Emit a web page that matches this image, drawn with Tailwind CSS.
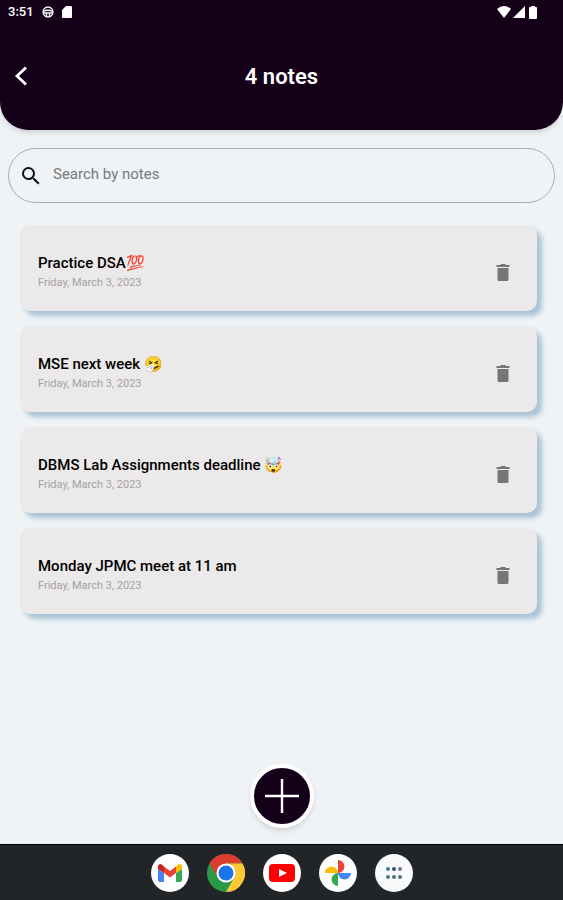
<!DOCTYPE html>
<html lang="en">
<head>
    <meta charset="UTF-8">
    <meta name="viewport" content="width=device-width, initial-scale=1.0">
    <title>Notes</title>
    <script src="https://cdn.jsdelivr.net/npm/@tailwindcss/browser@4"></script>
</head>
<body class="min-h-screen flex flex-col bg-[#eff3f6] font-[Roboto,sans-serif]">
    <!-- Header -->
    <header class="bg-[#150019] text-white rounded-b-[28px] shadow-md pb-[30px]">
        <div class="h-6 flex items-center justify-between pl-2 pr-6 text-[13px] font-medium">
            <div class="flex items-center gap-2">
                <span>3:51</span>
                <svg class="size-3" viewBox="0 0 24 24" fill="none" stroke="currentColor" stroke-width="2.6">
                    <circle cx="12" cy="12" r="10" />
                    <path d="M3 11Q12 6 21 11M3 14h18M9 14v7M15 14v7" />
                </svg>
                <svg class="w-[10px] h-3" viewBox="0 0 10 12" fill="currentColor">
                    <path d="M4 0h5a1 1 0 011 1v10a1 1 0 01-1 1H1a1 1 0 01-1-1V4z" />
                </svg>
            </div>
            <div class="flex items-center gap-[2px]">
                <svg class="w-[14px] h-3" viewBox="0 0 14 12" fill="currentColor"><path d="M0 3Q7-3 14 3L7 12z" /></svg>
                <svg class="size-3" viewBox="0 0 12 12" fill="currentColor"><path d="M12 0v12H0z" /></svg>
                <svg class="w-3 h-[13px]" viewBox="0 0 12 13" fill="currentColor"><path d="M4 0h4v1h1q1 0 1 1v10q0 1-1 1H3q-1 0-1-1V2q0-1 1-1h1z" /></svg>
            </div>
        </div>
        <div class="grid grid-cols-[1fr_auto_1fr] items-center h-[76px] pt-7 px-3">
            <button type="button" aria-label="Back" class="justify-self-start">
                <svg class="w-[18px] h-6" viewBox="0 0 18 24" fill="none" stroke="currentColor" stroke-width="2.8"><path d="M14 3.500L5 12l9 8.500" /></svg>
            </button>
            <h1 class="text-[22px] font-semibold">4 notes</h1>
        </div>
    </header>

    <main class="flex-1 flex flex-col px-2 pt-[18px]">
        <!-- Search -->
        <label class="flex items-center gap-3 h-[55px] border border-[#a9adb0] rounded-[28px] px-3">
            <svg class="size-5" viewBox="2 2 20 20" fill="#111111"><path d="M15.5 14h-.79l-.28-.27A6.47 6.47 0 0016 9.500 6.500 6.500 0 109.500 16c1.610 0 3.090-.59 4.230-1.570l.27.280v.790l5 4.990L20.490 19l-4.990-5zm-6 0C7.010 14 5 11.990 5 9.500S7.010 5 9.500 5 14 7.010 14 9.500 11.990 14 9.500 14z" /></svg>
            <input type="text" aria-label="Search by notes" placeholder="Search by notes" class="flex-1 pb-[2px] text-[15px] outline-none placeholder:text-[#77797b]">
        </label>

        <!-- Notes -->
        <ul class="flex flex-col gap-[15px] mt-[22px] ml-3 mr-[18px]">
            <li class="flex items-center justify-between h-[86px] px-[18px] pr-6 pt-[10px] rounded-[10px] bg-[#ebe9e9] shadow-[5px_5px_5px_#a9c3d5]">
                <div>
                    <h2 class="text-[15px] leading-5 font-medium text-black">Practice DSA💯</h2>
                    <p class="text-[11px] leading-5 text-[#a4a3a3]">Friday, March 3, 2023</p>
                </div>
                <button type="button" aria-label="Delete note" class="text-[#777676]">
                    <svg class="size-5" viewBox="0 0 20 20" fill="currentColor"><path d="M4.500 5h11v11.500q0 1.500-1.500 1.500H6q-1.500 0-1.500-1.500zM3.500 2H7l1-1h4l1 1h3.500v2h-13z" /></svg>
                </button>
            </li>
            <li class="flex items-center justify-between h-[86px] px-[18px] pr-6 pt-[10px] rounded-[10px] bg-[#ebe9e9] shadow-[5px_5px_5px_#a9c3d5]">
                <div>
                    <h2 class="text-[15px] leading-5 font-medium text-black">MSE next week 🤧</h2>
                    <p class="text-[11px] leading-5 text-[#a4a3a3]">Friday, March 3, 2023</p>
                </div>
                <button type="button" aria-label="Delete note" class="text-[#777676]">
                    <svg class="size-5" viewBox="0 0 20 20" fill="currentColor"><path d="M4.500 5h11v11.500q0 1.500-1.500 1.500H6q-1.500 0-1.500-1.500zM3.500 2H7l1-1h4l1 1h3.500v2h-13z" /></svg>
                </button>
            </li>
            <li class="flex items-center justify-between h-[86px] px-[18px] pr-6 pt-[10px] rounded-[10px] bg-[#ebe9e9] shadow-[5px_5px_5px_#a9c3d5]">
                <div>
                    <h2 class="text-[15px] leading-5 font-medium text-black">DBMS Lab Assignments deadline 🤯</h2>
                    <p class="text-[11px] leading-5 text-[#a4a3a3]">Friday, March 3, 2023</p>
                </div>
                <button type="button" aria-label="Delete note" class="text-[#777676]">
                    <svg class="size-5" viewBox="0 0 20 20" fill="currentColor"><path d="M4.500 5h11v11.500q0 1.500-1.500 1.500H6q-1.500 0-1.500-1.500zM3.500 2H7l1-1h4l1 1h3.500v2h-13z" /></svg>
                </button>
            </li>
            <li class="flex items-center justify-between h-[86px] px-[18px] pr-6 pt-[10px] rounded-[10px] bg-[#ebe9e9] shadow-[5px_5px_5px_#a9c3d5]">
                <div>
                    <h2 class="text-[15px] leading-5 font-medium text-black">Monday JPMC meet at 11 am</h2>
                    <p class="text-[11px] leading-5 text-[#a4a3a3]">Friday, March 3, 2023</p>
                </div>
                <button type="button" aria-label="Delete note" class="text-[#777676]">
                    <svg class="size-5" viewBox="0 0 20 20" fill="currentColor"><path d="M4.500 5h11v11.500q0 1.500-1.500 1.500H6q-1.500 0-1.500-1.500zM3.500 2H7l1-1h4l1 1h3.500v2h-13z" /></svg>
                </button>
            </li>
        </ul>

        <button type="button" aria-label="Add note" class="mt-auto mb-4 self-center size-16 rounded-full border-4 border-white bg-[#150019] text-white flex items-center justify-center shadow-md">
            <svg class="size-9" viewBox="0 0 36 36" stroke="currentColor" stroke-width="2.4"><path d="M18 1v34M1 18h34" /></svg>
        </button>
    </main>

    <!-- Dock -->
    <nav class="h-14 bg-[#212528] border-t border-black flex items-center justify-center gap-[18px]">
        <a href="#" aria-label="Gmail" class="size-[38px] rounded-full bg-white flex items-center justify-center">
            <svg class="w-[26px] h-5" viewBox="0 0 26 20">
                <path fill="#4285f4" d="M1 6l6 4v9H3q-2 0-2-2z" />
                <path fill="#34a853" d="M25 6l-6 4v9h4q2 0 2-2z" />
                <path fill="#ea4335" d="M7 3.500l6 4.500 6-4.500v6.500l-6 4.500L7 10z" />
                <path fill="#c5221f" d="M1 3.500Q1 1 3.500 1 5 1 7 3.500V10L1 6z" />
                <path fill="#fbbc04" d="M25 3.500Q25 1 22.500 1 21 1 19 3.500V10l6-4z" />
            </svg>
        </a>
        <a href="#" aria-label="Chrome" class="size-[38px]">
            <svg class="size-full" viewBox="0 0 38 38">
                <circle cx="19" cy="19" r="19" fill="#2b9a47" />
                <path fill="#db3d2e" d="M2.500 9.500A19 19 0 0135.500 9.500H19L11 24z" />
                <path fill="#fcc934" d="M35.500 9.500A19 19 0 0119 38L27 24 19 9.500z" />
                <circle cx="19" cy="19" r="9.500" fill="#fff" />
                <circle cx="19" cy="19" r="7.500" fill="#1a73e8" />
            </svg>
        </a>
        <a href="#" aria-label="YouTube" class="size-[38px] rounded-full bg-white flex items-center justify-center">
            <svg class="w-[26px] h-[18px]" viewBox="0 0 26 18">
                <rect width="26" height="18" rx="4" fill="#f00" />
                <path fill="#fff" d="M10 5l8 4-8 4z" />
            </svg>
        </a>
        <a href="#" aria-label="Photos" class="size-[38px] rounded-full bg-white flex items-center justify-center">
            <svg class="size-7" viewBox="0 0 28 28">
                <path fill="#ea4335" d="M14 1a6.500 6.500 0 010 13z" />
                <path fill="#4285f4" d="M27 14a6.500 6.500 0 01-13 0z" />
                <path fill="#34a853" d="M14 27a6.500 6.500 0 010-13z" />
                <path fill="#fbbc04" d="M1 14a6.500 6.500 0 0113 0z" />
            </svg>
        </a>
        <a href="#" aria-label="All apps" class="size-[38px] rounded-full bg-[#f8fafb] flex items-center justify-center">
            <svg class="w-[18px] h-3" viewBox="0 0 18 12">
                <circle cx="3" cy="2" r="2" fill="#457b92" />
                <circle cx="9" cy="2" r="2" fill="#32527d" />
                <circle cx="15" cy="2" r="2" fill="#77718b" />
                <circle cx="3" cy="10" r="2" fill="#587477" />
                <circle cx="9" cy="10" r="2" fill="#587477" />
                <circle cx="15" cy="10" r="2" fill="#587477" />
            </svg>
        </a>
    </nav>
</body>
</html>
